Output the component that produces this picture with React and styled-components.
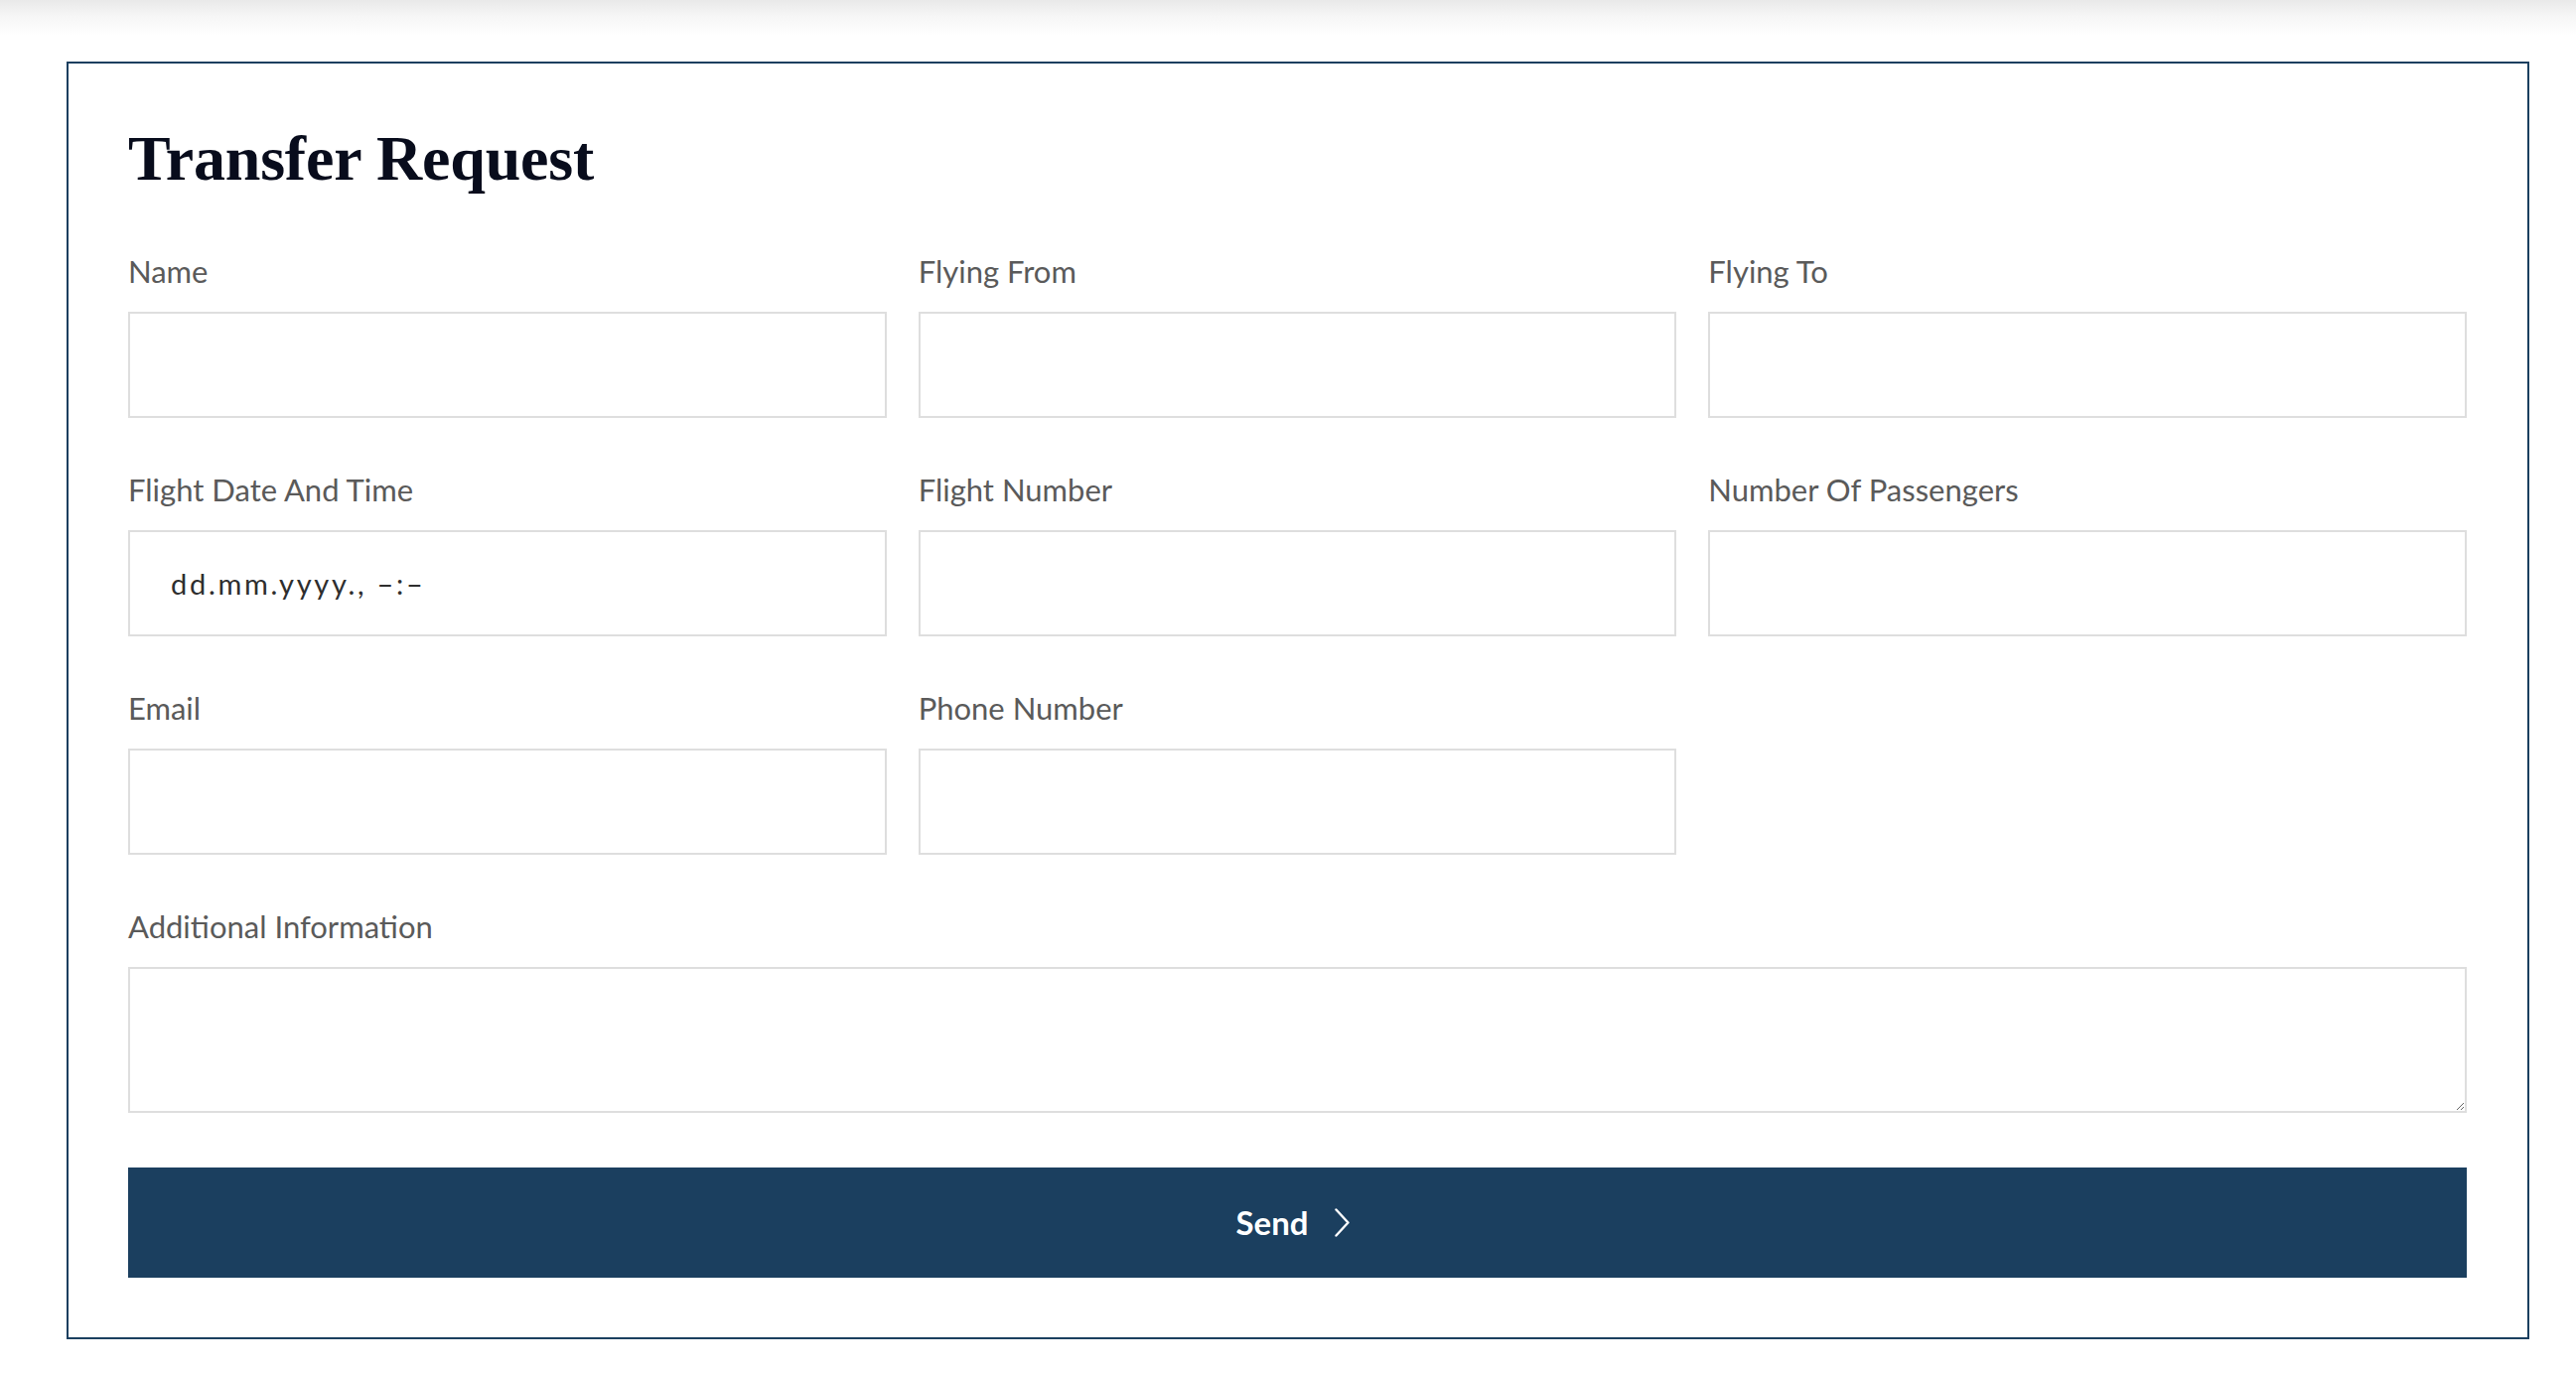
import React from 'react'
import styled, { createGlobalStyle } from 'styled-components'

const GlobalStyle = createGlobalStyle`
  html, body {
    margin: 0;
    padding: 0;
    background: #ffffff;
    font-family: Lato, "Open Sans", Arial, sans-serif;
  }
  * {
    box-sizing: border-box;
  }
`

const fields = [
  { id: 'name', label: 'Name' },
  { id: 'from', label: 'Flying From' },
  { id: 'to', label: 'Flying To' },
  { id: 'date', label: 'Flight Date And Time', placeholder: 'dd.mm.yyyy., –:–' },
  { id: 'flight', label: 'Flight Number' },
  { id: 'passengers', label: 'Number Of Passengers' },
  { id: 'email', label: 'Email' },
  { id: 'phone', label: 'Phone Number' },
]

const ChevronRight = () => (
  <svg width="15" height="29" viewBox="0 0 15 29" fill="none">
    <polyline points="1.5,1.5 13.5,14.5 1.5,27.5" stroke="#ffffff" strokeWidth="2.4"
      strokeLinecap="round" strokeLinejoin="round" />
  </svg>
)

const App = () => {
  return <Page>
    <GlobalStyle />
    <TopShade />
    <Card>
      <Title>Transfer Request</Title>
      <FieldGrid>
        {fields.map(field => {
          return <Field key={field.id}>
            <Label htmlFor={field.id}>{field.label}</Label>
            {field.placeholder
              ? <DateInput id={field.id} type='text' placeholder={field.placeholder} />
              : <TextInput id={field.id} type='text' />}
          </Field>
        })}
        <Field $wide>
          <Label htmlFor='info'>Additional Information</Label>
          <MessageArea id='info' />
        </Field>
      </FieldGrid>
      <SendButton type='button'>
        <span>Send</span>
        <ChevronRight />
      </SendButton>
    </Card>
  </Page>
}

const Page = styled.div`
  width: 2594px;
  min-height: 1384px;
  padding: 0 47px 0 67px;
`

const TopShade = styled.div`
  height: 36px;
  margin: 0 -47px 26px -67px;
  background: linear-gradient(to bottom, #e9e9e9 0%, #f6f6f6 45%, #ffffff 100%);
`

const Card = styled.section`
  border: 2px solid #1b3f5f;
  background: #ffffff;
  padding: 64px 61px 60px 60px;
`

const Title = styled.h2`
  margin: 0 0 63px;
  font-family: "Liberation Serif", "Times New Roman", serif;
  font-weight: 700;
  font-size: 64px;
  line-height: 64px;
  color: #080c1c;
  letter-spacing: -0.2px;
`

const FieldGrid = styled.div`
  display: grid;
  grid-template-columns: repeat(3, 1fr);
  column-gap: 32px;
  row-gap: 54px;
`

const Field = styled.div`
  display: flex;
  flex-direction: column;
  grid-column: ${props => props.$wide ? '1 / -1' : 'auto'};
`

const Label = styled.label`
  font-family: Lato, "Open Sans", sans-serif;
  font-size: 31px;
  line-height: 37px;
  color: #5a5a5a;
  margin-bottom: 22px;
`

const TextInput = styled.input`
  display: block;
  width: 100%;
  height: 107px;
  padding: 0 41px;
  border: 2px solid #dedede;
  border-radius: 0;
  background: #ffffff;
  font-family: Lato, sans-serif;
  font-size: 29px;
  color: #2a2a2a;
  outline: none;
`

const DateInput = styled(TextInput)`
  letter-spacing: 2.7px;
  &::placeholder {
    color: #2e2e2e;
    opacity: 1;
  }
`

const MessageArea = styled.textarea`
  display: block;
  width: 100%;
  height: 147px;
  padding: 20px 41px;
  border: 2px solid #dedede;
  border-radius: 0;
  background: #ffffff;
  font-family: Lato, sans-serif;
  font-size: 29px;
  color: #2a2a2a;
  resize: vertical;
  outline: none;
`

const SendButton = styled.button`
  display: flex;
  align-items: center;
  justify-content: center;
  gap: 26px;
  width: 100%;
  height: 111px;
  margin-top: 55px;
  padding: 0;
  border: none;
  border-radius: 0;
  background: #1b3f5f;
  color: #ffffff;
  font-family: Lato, sans-serif;
  font-weight: 700;
  font-size: 33px;
  cursor: pointer;
  span {
    line-height: 1;
    margin-left: -10px;
  }
  svg {
    display: block;
  }
`

export default App
